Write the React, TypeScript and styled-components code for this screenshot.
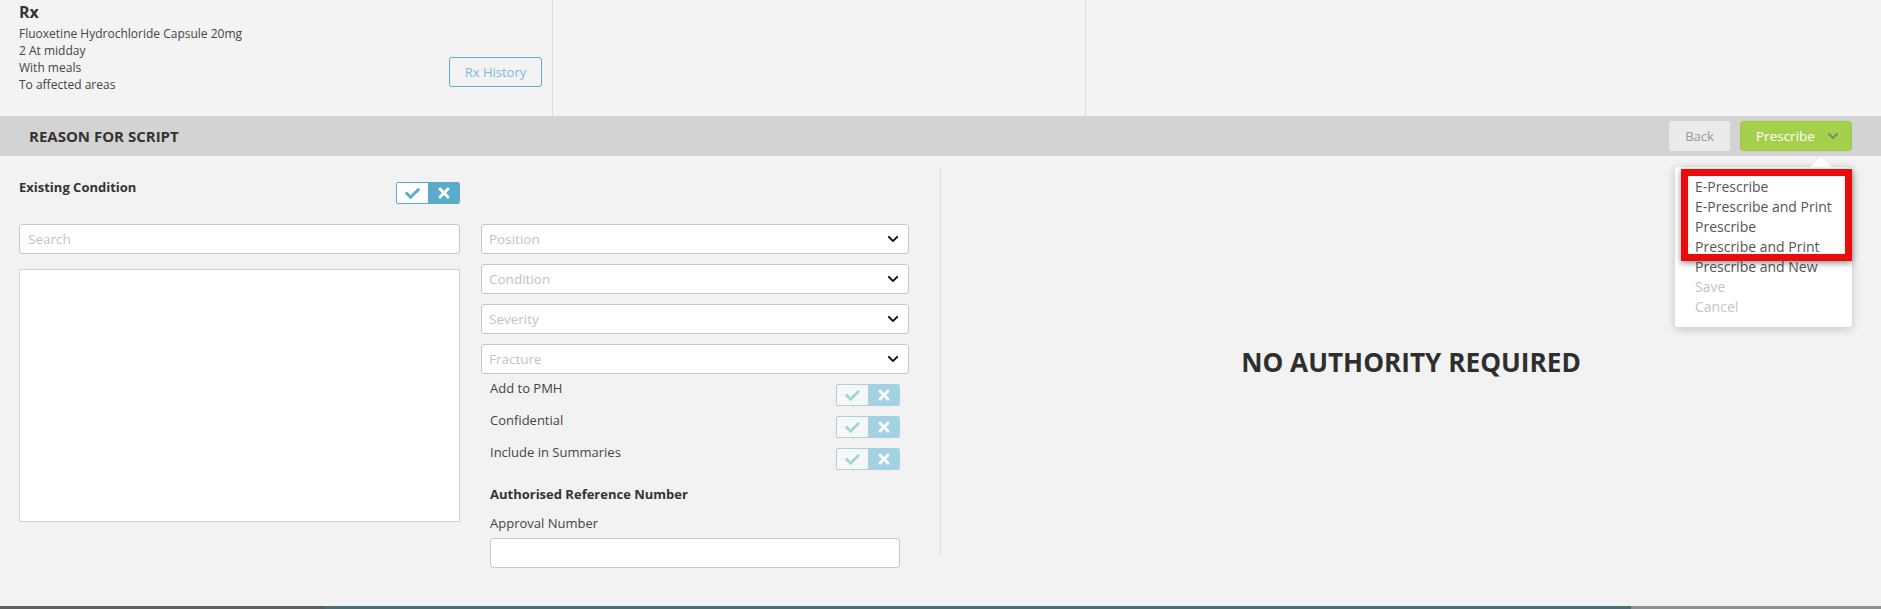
import React from "react";
import styled, { createGlobalStyle } from "styled-components";
import { FaCheck, FaTimes, FaChevronDown } from "react-icons/fa";

const GlobalStyle = createGlobalStyle`
  html, body { margin: 0; padding: 0; }
  body {
    width: 1881px;
    height: 609px;
    overflow: hidden;
    background: #f2f2f2;
    font-family: "Open Sans", "DejaVu Sans", sans-serif;
    color: #444;
  }
  * { box-sizing: border-box; }
`;

const Page = styled.div`
  width: 1881px;
  height: 609px;
  display: flex;
  flex-direction: column;
`;

const TopPanel = styled.div`
  height: 116px;
  background: #f3f3f3;
  display: grid;
  grid-template-columns: 553px 533px 1fr;
`;

const TopColumn = styled.div<{ $divider?: boolean }>`
  border-right: ${(p) => (p.$divider ? "1px solid #dcdcdc" : "none")};
  display: flex;
  justify-content: space-between;
  align-items: flex-start;
  padding: 1px 10px 0 19px;
`;

const RxBlock = styled.div`
  display: flex;
  flex-direction: column;
`;

const RxTitle = styled.div`
  font-size: 16px;
  font-weight: 700;
  line-height: 22px;
  color: #333;
  margin-bottom: 2px;
`;

const RxLine = styled.div`
  font-size: 12px;
  line-height: 17px;
  color: #444;
`;

const OutlineButton = styled.button`
  margin-top: 56px;
  width: 93px;
  height: 30px;
  background: transparent;
  border: 1px solid #5eaed2;
  border-radius: 3px;
  color: #7fbad6;
  font-family: "Open Sans", sans-serif;
  font-size: 13px;
  cursor: pointer;
`;

const HeaderBar = styled.div`
  height: 40px;
  background: #d3d3d3;
  display: flex;
  align-items: center;
  justify-content: space-between;
  padding: 0 29px;
`;

const HeaderTitle = styled.div`
  font-size: 15px;
  font-weight: 700;
  color: #333;
`;

const ActionGroup = styled.div`
  position: relative;
  display: flex;
  gap: 10px;
`;

const BackButton = styled.button`
  width: 61px;
  height: 30px;
  border: none;
  border-radius: 3px;
  background: #ebebeb;
  color: #9a9a9a;
  font-family: "Open Sans", sans-serif;
  font-size: 13px;
`;

const PrimaryButton = styled.button`
  width: 112px;
  height: 30px;
  border: 1px solid #9bc844;
  border-radius: 3px;
  background: #a5d04c;
  color: #fff;
  font-family: "Open Sans", sans-serif;
  font-size: 13.5px;
  display: flex;
  align-items: center;
  padding: 0 0 0 15px;
  gap: 12px;
  svg { color: #7b8a6a; }
`;

const Menu = styled.div`
  position: absolute;
  top: 46px;
  right: 0;
  width: 177px;
  padding: 10px 0;
  background: #fff;
  border-radius: 3px;
  box-shadow: 0 2px 10px rgba(0, 0, 0, 0.2);
  z-index: 10;
`;

const Caret = styled.div`
  position: absolute;
  top: -10px;
  right: 20px;
  width: 0;
  height: 0;
  border-left: 11px solid transparent;
  border-right: 11px solid transparent;
  border-bottom: 10px solid #fff;
`;

const MenuItem = styled.div<{ $disabled?: boolean }>`
  padding-left: 20px;
  font-size: 14px;
  line-height: 20px;
  color: ${(p) => (p.$disabled ? "#c4c4c4" : "#555")};
  white-space: nowrap;
`;

const Highlight = styled.div`
  position: absolute;
  left: 6px;
  top: 2px;
  width: 171px;
  height: 92px;
  border: 7px solid #e80c0c;
  box-shadow: 0 2px 6px rgba(0, 0, 0, 0.45), inset 0 0 2px rgba(0, 0, 0, 0.2);
  pointer-events: none;
`;

const Body = styled.div`
  height: 450px;
  background: #f2f2f2;
  display: flex;
  align-items: flex-start;
`;

const LeftColumn = styled.div`
  width: 441px;
  margin-left: 19px;
  padding-top: 22px;
  display: flex;
  flex-direction: column;
`;

const FieldHeader = styled.div`
  height: 46px;
  display: flex;
  justify-content: space-between;
  align-items: flex-start;
`;

const BoldLabel = styled.div<{ $mt?: number }>`
  font-size: 13px;
  font-weight: 700;
  line-height: 18px;
  color: #333;
  margin-top: ${(p) => p.$mt ?? 0}px;
`;

const Label = styled.div<{ $mt?: number }>`
  font-size: 13px;
  line-height: 18px;
  color: #444;
  margin-top: ${(p) => p.$mt ?? 0}px;
`;

const ToggleWrap = styled.div<{ $faded?: boolean; $mt?: number }>`
  display: flex;
  width: 64px;
  height: 22px;
  margin-top: ${(p) => p.$mt ?? 0}px;
  border: 1px solid ${(p) => (p.$faded ? "#a5d2e0" : "#5aabc9")};
  border-radius: 2px;
  overflow: hidden;
  flex-shrink: 0;
`;

const ToggleHalf = styled.div<{ $on?: boolean; $faded?: boolean }>`
  flex: 1;
  display: flex;
  align-items: center;
  justify-content: center;
  background: ${(p) =>
    p.$on ? (p.$faded ? "#a5d2e0" : "#5aabc9") : p.$faded ? "#f7f7f7" : "#fff"};
  color: ${(p) => (p.$on ? "#fff" : p.$faded ? "#a5d2e0" : "#5aabc9")};
`;

const TextInput = styled.input<{ $width?: number; $mt?: number }>`
  width: ${(p) => (p.$width ? `${p.$width}px` : "100%")};
  height: 30px;
  margin-top: ${(p) => p.$mt ?? 0}px;
  border: 1px solid #c9c9c9;
  border-radius: 3px;
  background: #fff;
  padding: 0 8px;
  font-family: "Open Sans", sans-serif;
  font-size: 13.5px;
  color: #444;
  outline: none;
  &::placeholder { color: #c3c3c3; }
`;

const ListBox = styled.div`
  margin-top: 15px;
  height: 253px;
  background: #fff;
  border: 1px solid #d0d0d0;
`;

const MiddleColumn = styled.div`
  width: 428px;
  margin-left: 21px;
  padding-top: 68px;
  display: flex;
  flex-direction: column;
`;

const SelectStack = styled.div`
  display: flex;
  flex-direction: column;
  gap: 10px;
`;

const SelectBox = styled.div`
  height: 30px;
  background: #fff;
  border: 1px solid #c9c9c9;
  border-radius: 3px;
  display: flex;
  align-items: center;
  justify-content: space-between;
  padding: 0 9px 0 7px;
  font-size: 13.5px;
  color: #c3c3c3;
  svg { color: #111; }
`;

const OptionsBlock = styled.div`
  margin-top: 5px;
  padding: 0 9px;
  display: flex;
  flex-direction: column;
`;

const OptionRow = styled.div`
  height: 32px;
  display: flex;
  justify-content: space-between;
  align-items: flex-start;
`;

const RightPanel = styled.div`
  flex: 1;
  margin-left: 31px;
  margin-top: 12px;
  height: 388px;
  border-left: 1px solid #dcdcdc;
  display: flex;
  align-items: center;
  justify-content: center;
`;

const AuthorityText = styled.div`
  font-size: 26.2px;
  font-weight: 700;
  color: #2e2e2e;
`;

const Taskbar = styled.div`
  height: 3px;
  display: flex;
`;

const TaskSegment = styled.div<{ $color: string; $w?: number }>`
  background: ${(p) => p.$color};
  width: ${(p) => (p.$w ? `${p.$w}px` : "auto")};
  flex: ${(p) => (p.$w ? "none" : 1)};
`;

const Toggle: React.FC<{ faded?: boolean; mt?: number }> = ({ faded, mt }) => (
  <ToggleWrap $faded={faded} $mt={mt}>
    <ToggleHalf $faded={faded}>
      <FaCheck size={15} />
    </ToggleHalf>
    <ToggleHalf $on $faded={faded}>
      <FaTimes size={16} />
    </ToggleHalf>
  </ToggleWrap>
);

const menuItems = [
  { label: "E-Prescribe" },
  { label: "E-Prescribe and Print" },
  { label: "Prescribe" },
  { label: "Prescribe and Print" },
  { label: "Prescribe and New" },
  { label: "Save", disabled: true },
  { label: "Cancel", disabled: true },
];

const selects = ["Position", "Condition", "Severity", "Fracture"];
const options = ["Add to PMH", "Confidential", "Include in Summaries"];

export default function App() {
  return (
    <>
      <GlobalStyle />
      <Page>
        <TopPanel>
          <TopColumn $divider>
            <RxBlock>
              <RxTitle>Rx</RxTitle>
              <RxLine>Fluoxetine Hydrochloride Capsule 20mg</RxLine>
              <RxLine>2 At midday</RxLine>
              <RxLine>With meals</RxLine>
              <RxLine>To affected areas</RxLine>
            </RxBlock>
            <OutlineButton>Rx History</OutlineButton>
          </TopColumn>
          <TopColumn $divider />
          <TopColumn />
        </TopPanel>

        <HeaderBar>
          <HeaderTitle>REASON FOR SCRIPT</HeaderTitle>
          <ActionGroup>
            <BackButton>Back</BackButton>
            <PrimaryButton>
              Prescribe
              <FaChevronDown size={12} />
            </PrimaryButton>
            <Menu>
              <Caret />
              {menuItems.map((m) => (
                <MenuItem key={m.label} $disabled={m.disabled}>
                  {m.label}
                </MenuItem>
              ))}
              <Highlight />
            </Menu>
          </ActionGroup>
        </HeaderBar>

        <Body>
          <LeftColumn>
            <FieldHeader>
              <BoldLabel>Existing Condition</BoldLabel>
              <Toggle mt={4} />
            </FieldHeader>
            <TextInput placeholder="Search" />
            <ListBox />
          </LeftColumn>

          <MiddleColumn>
            <SelectStack>
              {selects.map((s) => (
                <SelectBox key={s}>
                  <span>{s}</span>
                  <FaChevronDown size={12} />
                </SelectBox>
              ))}
            </SelectStack>
            <OptionsBlock>
              {options.map((o) => (
                <OptionRow key={o}>
                  <Label>{o}</Label>
                  <Toggle faded mt={5} />
                </OptionRow>
              ))}
              <BoldLabel $mt={10}>Authorised Reference Number</BoldLabel>
              <Label $mt={11}>Approval Number</Label>
              <TextInput $width={410} $mt={6} />
            </OptionsBlock>
          </MiddleColumn>

          <RightPanel>
            <AuthorityText>NO AUTHORITY REQUIRED</AuthorityText>
          </RightPanel>
        </Body>

        <Taskbar>
          <TaskSegment $color="#5c5f60" $w={325} />
          <TaskSegment $color="#4d6c74" />
          <TaskSegment $color="#8a8f90" $w={250} />
        </Taskbar>
      </Page>
    </>
  );
}
